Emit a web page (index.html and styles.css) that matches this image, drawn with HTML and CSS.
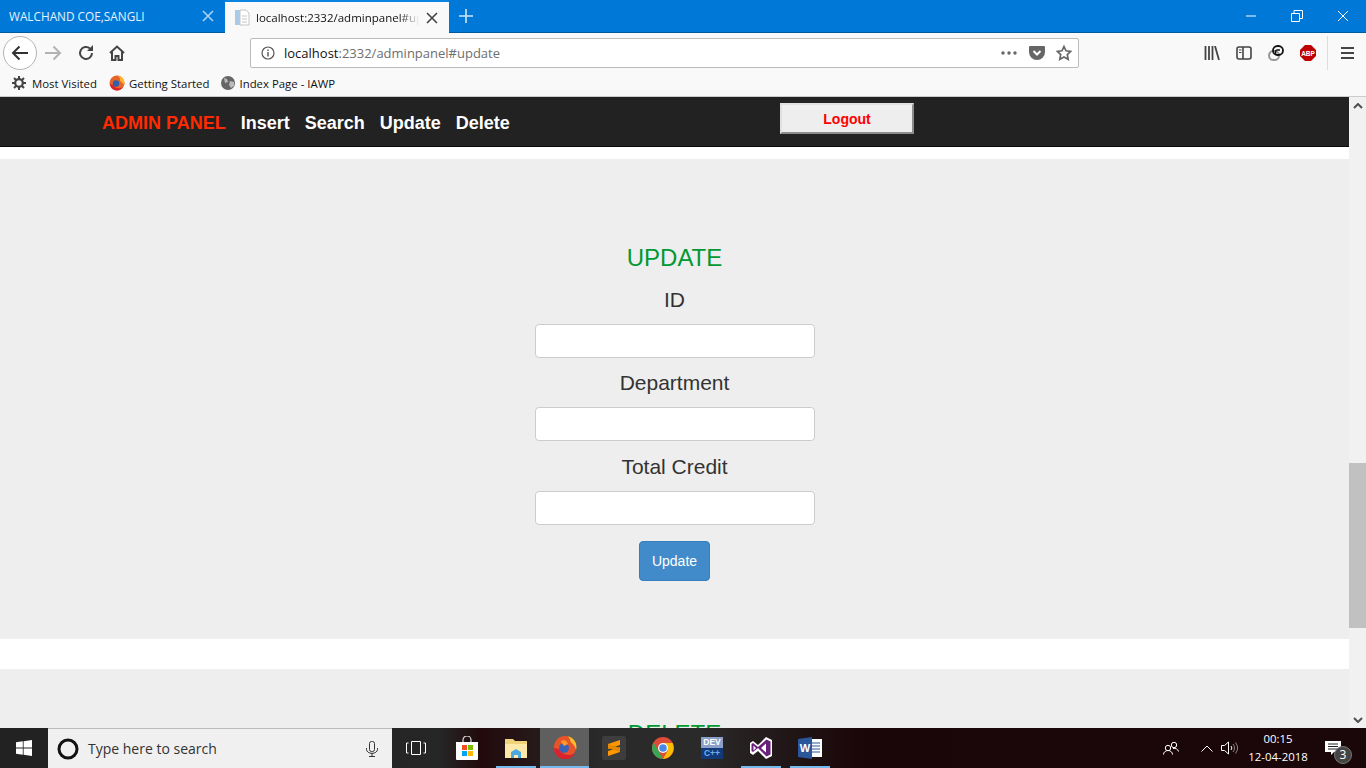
FILE: index.html
```html
<!DOCTYPE html>
<html lang="en">
<head>
    <meta charset="UTF-8">
    <title>Admin Panel</title>
    <link rel="stylesheet" href="styles.css">
</head>
<body>
    <div class="tabbar">
        <div class="tab">
            <span class="tab-title">WALCHAND COE,SANGLI</span>
            <svg class="tab-close" width="12" height="12" viewBox="0 0 12 12"><path d="M1 1l10 10M11 1L1 11" stroke="#a9d3f2" stroke-width="1.6"/></svg>
        </div>
        <div class="tab tab-active">
            <svg class="tab-icon" width="16" height="17" viewBox="0 0 16 17"><path d="M1 1h5v15H1z" fill="#a9cbe8"/><path d="M6 1h6l3 3v12H6z" fill="#fff" stroke="#c4c4c4"/><path d="M8 7h5M8 10h5M8 13h5" stroke="#c4c4c4"/></svg>
            <span class="tab-title tab-fade">localhost:2332/adminpanel#update</span>
            <svg class="tab-close" width="12" height="12" viewBox="0 0 12 12"><path d="M1 1l10 10M11 1L1 11" stroke="#444" stroke-width="1.6"/></svg>
        </div>
        <svg class="new-tab" width="14" height="14" viewBox="0 0 14 14"><path d="M7 0v14M0 7h14" stroke="#cfe6f8" stroke-width="1.6"/></svg>
        <div class="window-buttons">
            <svg width="12" height="12" viewBox="0 0 12 12"><path d="M1 6h10" stroke="#fff"/></svg>
            <svg width="12" height="12" viewBox="0 0 12 12"><path d="M.5 3.5h8v8h-8zM3 3V.5h8.500v8H9" fill="none" stroke="#fff"/></svg>
            <svg width="12" height="12" viewBox="0 0 12 12"><path d="M1 1l10 10M11 1L1 11" stroke="#fff"/></svg>
        </div>
    </div>

    <div class="toolbar">
        <div class="back-button">
            <svg width="18" height="16" viewBox="0 0 18 16"><path d="M17 8H2M8.500 1.500L2 8l6.500 6.500" fill="none" stroke="#333" stroke-width="2"/></svg>
        </div>
        <div class="tool">
            <svg width="18" height="16" viewBox="0 0 18 16"><path d="M1 8h15M9.500 1.500L16 8l-6.500 6.500" fill="none" stroke="#b3b3b3" stroke-width="2"/></svg>
        </div>
        <div class="tool tool-reload">
            <svg width="16" height="16" viewBox="0 0 16 16"><path d="M14 8a6 6 0 1 1-2-4.500" fill="none" stroke="#444" stroke-width="2"/><path d="M15 0v6H9z" fill="#444"/></svg>
        </div>
        <div class="tool">
            <svg width="16" height="16" viewBox="0 0 16 16"><path d="M1 8l7-6.500L15 8M3 7v8h3.500v-4h3v4H13V7" fill="none" stroke="#444" stroke-width="2"/></svg>
        </div>
        <div class="urlbar">
            <svg class="url-info" width="14" height="14" viewBox="0 0 14 14"><circle cx="7" cy="7" r="6" fill="none" stroke="#555" stroke-width="1.2"/><path d="M7 6v4.500M7 3.500v1.500" stroke="#555" stroke-width="1.400"/></svg>
            <span class="url-text">localhost<span class="url-rest">:2332/adminpanel#update</span></span>
            <div class="url-actions">
                <svg width="18" height="4" viewBox="0 0 18 4"><circle cx="3" cy="2" r="1.700" fill="#666"/><circle cx="9" cy="2" r="1.700" fill="#666"/><circle cx="15" cy="2" r="1.700" fill="#666"/></svg>
                <svg width="16" height="14" viewBox="0 0 16 14"><path d="M1 0h14a1 1 0 0 1 1 1v5a8 8 0 0 1-16 0V1a1 1 0 0 1 1-1z" fill="#666"/><path d="M4.500 5L8 8.500 11.500 5" fill="none" stroke="#fff" stroke-width="2"/></svg>
                <svg width="16" height="16" viewBox="0 0 16 16"><path d="M8 1.500l2 4.300 4.700.6-3.400 3.200.9 4.700L8 12l-4.200 2.300.9-4.700L1.300 6.400 6 5.800z" fill="none" stroke="#666" stroke-width="1.700"/></svg>
            </div>
        </div>
        <div class="tool">
            <svg width="16" height="14" viewBox="0 0 16 14"><path d="M1.500 0v14M5 0v14M8.500 0v14M11 0l4 14" fill="none" stroke="#444" stroke-width="1.800"/></svg>
        </div>
        <div class="tool">
            <svg width="16" height="14" viewBox="0 0 16 14"><rect x="1" y="1" width="14" height="12" rx="2" fill="none" stroke="#444" stroke-width="1.600"/><path d="M7 1v12" stroke="#444" stroke-width="1.600"/><path d="M3 4h2.500M3 6.500h2.500" stroke="#444"/></svg>
        </div>
        <div class="tool">
            <svg width="16" height="16" viewBox="0 0 16 16"><rect x="1" y="6" width="10" height="9" rx="4.500" fill="none" stroke="#999" stroke-width="2"/><rect x="5" y="1" width="10" height="9" rx="4.500" fill="none" stroke="#111" stroke-width="1.800"/><path d="M7.500 9V7a2 2 0 0 1 2-2h2.500" fill="none" stroke="#111" stroke-width="1.500"/></svg>
        </div>
        <div class="tool">
            <svg width="16" height="16" viewBox="0 0 16 16"><path d="M5 0h6l5 5v6l-5 5H5l-5-5V5z" fill="#c00000"/><text x="8" y="10.500" class="abp-text">ABP</text></svg>
        </div>
        <div class="toolbar-sep"></div>
        <div class="tool">
            <svg width="13" height="12" viewBox="0 0 13 12"><path d="M0 1h13M0 6h13M0 11h13" stroke="#444" stroke-width="2"/></svg>
        </div>
    </div>

    <div class="bookmarks">
        <div class="bookmark bookmark-gear">
            <svg width="14" height="14" viewBox="0 0 14 14"><circle cx="7" cy="7" r="3.800" fill="none" stroke="#444" stroke-width="2.200"/><path d="M7 0v3M7 11v3M0 7h3M11 7h3M2 2l2 2M10 10l2 2M12 2l-2 2M4 10l-2 2" stroke="#444" stroke-width="2"/></svg>
            <span>Most Visited</span>
        </div>
        <div class="bookmark bookmark-ff">
            <svg width="16" height="16" viewBox="0 0 16 16"><circle cx="8" cy="8" r="7.500" fill="#e8632a"/><path d="M8 .5a7.500 7.500 0 0 1 7 10c-1-4-4-3-4-6 0-2-1-3-3-4z" fill="#ffb52e"/><circle cx="7" cy="8.500" r="3.200" fill="#2f5fa8"/><path d="M1 9a7 7 0 0 0 13 3c-3 2-8 2-10-2z" fill="#d8232a"/></svg>
            <span>Getting Started</span>
        </div>
        <div class="bookmark">
            <svg width="14" height="14" viewBox="0 0 14 14"><circle cx="7" cy="7" r="7" fill="#666"/><path d="M3 2l3 1 1 3-3 1zM9 5l4 1v4l-3 2-2-3z" fill="#bbb"/></svg>
            <span>Index Page - IAWP</span>
        </div>
    </div>

    <div class="page">
        <div class="content">
            <nav class="navbar">
                <div class="nav-links">
                    <a class="nav-brand">ADMIN PANEL</a>
                    <a>Insert</a>
                    <a>Search</a>
                    <a>Update</a>
                    <a>Delete</a>
                </div>
                <button class="logout">Logout</button>
            </nav>

            <section class="panel panel-update">
                <h3>UPDATE</h3>
                <label>ID</label>
                <input type="text">
                <label>Department</label>
                <input type="text">
                <label>Total Credit</label>
                <input type="text">
                <button class="btn-primary">Update</button>
            </section>

            <section class="panel panel-delete">
                <h3>DELETE</h3>
            </section>
        </div>
        <div class="scrollbar">
            <div class="scroll-arrow">
                <svg width="10" height="6" viewBox="0 0 10 6"><path d="M1 5l4-4 4 4" fill="none" stroke="#505050" stroke-width="2"/></svg>
            </div>
            <div class="scroll-track"><div class="scroll-thumb"></div></div>
            <div class="scroll-arrow">
                <svg width="10" height="6" viewBox="0 0 10 6"><path d="M1 1l4 4 4-4" fill="none" stroke="#505050" stroke-width="2"/></svg>
            </div>
        </div>
    </div>

    <div class="taskbar">
        <div class="start">
            <svg width="16" height="16" viewBox="0 0 16 16"><path d="M0 2.300l6.800-1v6.300H0zM7.600 1.200L16 0v7.600H7.600zM0 8.400h6.800v6.300l-6.800-1zM7.600 8.400H16V16l-8.400-1.200z" fill="#fff"/></svg>
        </div>
        <div class="search">
            <svg width="22" height="22" viewBox="0 0 22 22"><circle cx="11" cy="11" r="9" fill="none" stroke="#111" stroke-width="3"/></svg>
            <span class="search-text">Type here to search</span>
            <svg class="search-mic" width="12" height="16" viewBox="0 0 12 16"><rect x="3.500" y=".5" width="5" height="10" rx="2" fill="none" stroke="#333"/><path d="M.5 7v1.500a5 3.500 0 0 0 11 0V7M6 12v3M3 15.500h6" fill="none" stroke="#333"/></svg>
        </div>
        <div class="task-view">
            <svg width="20" height="14" viewBox="0 0 20 14"><path d="M5.500.5h9v13h-9zM2.500 2H.5v10h2M17.500 2h2v10h-2" fill="none" stroke="#fff"/></svg>
        </div>
        <div class="task-icons">
            <div class="task-icon">
                <svg width="24" height="24" viewBox="0 0 24 24"><path d="M8 6V4a4 4 0 0 1 8 0v2" fill="none" stroke="#ddd" stroke-width="1.200"/><path d="M1 6h22v17a1 1 0 0 1-1 1H2a1 1 0 0 1-1-1z" fill="#fff"/><path d="M7 9h5v5H7z" fill="#f25022"/><path d="M13 9h5v5h-5z" fill="#7fba00"/><path d="M7 15h5v5H7z" fill="#00a4ef"/><path d="M13 15h5v5h-5z" fill="#ffb900"/></svg>
            </div>
            <div class="task-icon task-open">
                <svg width="24" height="22" viewBox="0 0 24 22"><path d="M1 2h8l2 2h12v17H1z" fill="#f0d27a"/><path d="M1 7h22v14H1z" fill="#ffe9a8"/><path d="M7 21v-6l5-3 5 3v6h-3v-3h-4v3z" fill="#4aa8e0"/></svg>
            </div>
            <div class="task-icon task-active">
                <svg width="24" height="24" viewBox="0 0 24 24"><circle cx="12" cy="12" r="11" fill="#e8532a"/><path d="M13 1a11 11 0 0 1 10 14c-1-6-5-6-6-10 0-2-2-4-4-4z" fill="#ffbd2e"/><circle cx="11" cy="13" r="5" fill="#3a62b5"/><path d="M8 6c3-2 6 0 7 3l-4 2c-1-2-3-3-3-5z" fill="#ff9a2a"/><path d="M1 13a11 11 0 0 0 21 5c-4 3-13 3-16-4z" fill="#d9232e"/></svg>
            </div>
            <div class="task-icon">
                <svg width="24" height="24" viewBox="0 0 24 24"><rect width="24" height="24" rx="2" fill="#3d3d3d"/><path d="M18 4v5L6 13V8z" fill="#ff9800"/><path d="M18 11v5L6 20v-5z" fill="#ff9800"/><path d="M6 8l12 4v4L6 12z" fill="#e58a00"/></svg>
            </div>
            <div class="task-icon">
                <svg width="22" height="22" viewBox="0 0 22 22"><circle cx="11" cy="11" r="11" fill="#dd4b39"/><path d="M1.500 5.500L7 15l4 7A11 11 0 0 1 1.500 5.500z" fill="#34a853"/><path d="M11 6h9.500A11 11 0 0 1 11 22l5-9z" fill="#fbbc05"/><circle cx="11" cy="11" r="5" fill="#fff"/><circle cx="11" cy="11" r="3.800" fill="#4a88e8"/></svg>
            </div>
            <div class="task-icon">
                <div class="dev-cpp"><span>DEV</span><span class="dev-plus">C++</span></div>
            </div>
            <div class="task-icon task-open">
                <svg width="24" height="24" viewBox="0 0 24 24"><path d="M17 1l6 3v16l-6 3-8-8-5 4-3-2V7l3-2 5 4z" fill="#fff"/><path d="M17.500 3.500l4 2v13l-4 2-8.500-8.500-5 4-1.500-1V8l1.500-1 5 4zM17 7.500L12 12l5 4.500zM4.500 9.500v5L7 12z" fill="#68217a" fill-rule="evenodd"/></svg>
            </div>
            <div class="task-icon task-open">
                <svg width="24" height="22" viewBox="0 0 24 22"><path d="M10 2h14v18H10z" fill="#fff"/><path d="M13 6h9M13 9h9M13 12h9M13 15h9" stroke="#2b579a"/><path d="M0 2l14-2v22L0 20z" fill="#2b579a"/><text x="7" y="15" class="word-text">W</text></svg>
            </div>
        </div>
        <div class="tray">
            <svg class="tray-people" width="16" height="14" viewBox="0 0 16 14"><circle cx="11" cy="4" r="2.700" fill="none" stroke="#fff"/><circle cx="5" cy="7" r="2.700" fill="none" stroke="#fff"/><path d="M.5 13.500a4.500 4 0 0 1 9 0M10 7.500c2.500-.500 5 .5 5.500 3" fill="none" stroke="#fff"/></svg>
            <svg class="tray-arrow" width="12" height="7" viewBox="0 0 12 7"><path d="M.5 6.500L6 1l5.500 5.500" fill="none" stroke="#fff"/></svg>
            <svg class="tray-sound" width="17" height="14" viewBox="0 0 17 14"><path d="M.5 4.500h3l4-3.500v12l-4-3.500h-3z" fill="none" stroke="#fff"/><path d="M10 5a3 3 0 0 1 0 4" fill="none" stroke="#fff"/><path d="M12 3a6 6 0 0 1 0 8M14.500 1.500a9 9 0 0 1 0 11" fill="none" stroke="#888"/></svg>
            <div class="clock">
                <span>00:15</span>
                <span>12-04-2018</span>
            </div>
            <div class="notify">
                <svg width="16" height="15" viewBox="0 0 16 15"><path d="M0 0h16v11h-7l-3 3v-3H0z" fill="#fff"/><path d="M3 3h10M3 5.500h10M3 8h10" stroke="#222"/></svg>
                <span class="notify-badge">3</span>
            </div>
        </div>
    </div>
</body>
</html>
```

FILE: styles.css
```css
* {
    box-sizing: border-box;
}

html, body {
    height: 768px;
}

body {
    margin: 0;
    overflow: hidden;
    display: flex;
    flex-direction: column;
    font-family: "Open Sans", "Noto Sans", sans-serif;
    background-color: #fff;
}

svg {
    display: block;
    flex: none;
}

/* browser tabs */
.tabbar {
    height: 33px;
    display: flex;
    align-items: stretch;
    background-color: #0078d7;
    border-bottom: 1px solid #005a9e;
    flex: none;
}

.tab {
    width: 225px;
    padding: 0 11px 0 9px;
    display: flex;
    align-items: center;
    color: #e6f2fb;
    font-size: 11.800px;
}

.tab-active {
    width: 224px;
    height: 33px;
    background-color: #f9f9f9;
    border-top: 2px solid #0a84e0;
    color: #111;
    font-size: 11.500px;
}

.tab-icon {
    margin-right: 6px;
}

.tab-title {
    flex: 1;
    overflow: hidden;
    white-space: nowrap;
}

.tab-fade {
    margin-right: 7px;
    mask-image: linear-gradient(90deg, #000 88%, transparent 100%);
}

.new-tab {
    margin: 9px 0 0 10px;
}

.window-buttons {
    margin-left: auto;
    display: flex;
    align-items: center;
    gap: 34px;
    padding-right: 17px;
}

/* nav toolbar */
.toolbar {
    height: 37px;
    display: flex;
    align-items: center;
    padding: 3px 0 0 3px;
    background-color: #f9f9f9;
    flex: none;
}

.back-button {
    width: 34px;
    height: 34px;
    border: 1px solid #b5b5b5;
    border-radius: 50%;
    background-color: #fff;
    display: flex;
    align-items: center;
    justify-content: center;
}

.tool {
    width: 32px;
    height: 32px;
    display: flex;
    align-items: center;
    justify-content: center;
}

.tool-reload {
    padding-left: 2px;
}

.urlbar {
    width: 829px;
    height: 30px;
    margin: 0 117px;
    padding: 0 6px 0 10px;
    display: flex;
    align-items: center;
    background-color: #fff;
    border: 1px solid #bcbcbc;
    border-radius: 2px;
}

.url-info {
    margin-right: 9px;
}

.url-text {
    font-size: 13px;
    color: #111;
}

.url-rest {
    color: #6e6e6e;
}

.url-actions {
    margin-left: auto;
    display: flex;
    align-items: center;
    gap: 11px;
}

.toolbar-sep {
    width: 1px;
    height: 34px;
    margin: 0 3px;
    background-color: #ddd;
}

.abp-text {
    font-family: "Liberation Sans", sans-serif;
    font-size: 6.500px;
    font-weight: bold;
    fill: #fff;
    text-anchor: middle;
}

/* bookmarks */
.bookmarks {
    height: 27px;
    display: flex;
    align-items: center;
    padding-left: 12px;
    background-color: #f9f9f9;
    border-bottom: 1px solid #ccc;
    flex: none;
}

.bookmark {
    display: flex;
    align-items: center;
    gap: 4px;
    font-size: 11.400px;
    color: #111;
}

.bookmark-gear {
    gap: 6px;
    margin-right: 12px;
}

.bookmark-ff {
    margin-right: 12px;
}

/* the page itself */
.page {
    flex: 1;
    min-height: 0;
    display: flex;
}

.content {
    flex: 1;
    min-width: 0;
    overflow: hidden;
    font-family: "Liberation Sans", Arial, sans-serif;
}

.navbar {
    height: 50px;
    display: flex;
    background-color: #222;
    border-bottom: 1px solid #080808;
}

.nav-links {
    width: 780px;
    padding: 4px 0 0 102px;
    display: flex;
    align-items: center;
    gap: 15px;
    font-size: 18px;
    font-weight: bold;
    color: #fff;
}

.nav-brand {
    color: #ff2a00;
}

.logout {
    width: 134px;
    height: 31px;
    margin-top: 6px;
    background-color: #eee;
    border: 2px outset #e0e0e0;
    color: #f00;
    font-family: "Liberation Sans", Arial, sans-serif;
    font-size: 14px;
    font-weight: bold;
}

.panel {
    display: flex;
    flex-direction: column;
    align-items: center;
    background-color: #eee;
    color: #333;
}

.panel h3 {
    margin: 0;
    height: 26px;
    line-height: 26px;
    font-size: 24px;
    font-weight: normal;
    color: #093;
}

.panel label {
    height: 22px;
    line-height: 22px;
    margin-bottom: 13px;
    font-size: 21px;
}

.panel input {
    width: 280px;
    height: 34px;
    margin-bottom: 14.400px;
    background-color: #fff;
    border: 1px solid #ccc;
    border-radius: 4px;
}

.panel-update {
    height: 480px;
    margin-top: 12px;
    padding-top: 86px;
}

.panel-update h3 {
    margin-bottom: 18px;
}

.panel-delete {
    margin-top: 30px;
    padding-top: 52px;
    height: 200px;
}

.btn-primary {
    width: 71px;
    height: 40px;
    margin-top: 1.800px;
    background-color: #428bca;
    border: 1px solid #357ebd;
    border-radius: 4px;
    color: #fff;
    font-family: "Liberation Sans", Arial, sans-serif;
    font-size: 14px;
}

.scrollbar {
    width: 17px;
    display: flex;
    flex-direction: column;
    background-color: #f1f1f1;
    flex: none;
}

.scroll-arrow {
    height: 17px;
    display: flex;
    align-items: center;
    justify-content: center;
    flex: none;
}

.scroll-track {
    flex: 1;
}

.scroll-thumb {
    height: 165px;
    margin-top: 349px;
    background-color: #c1c1c1;
}

/* windows taskbar */
.taskbar {
    height: 40px;
    display: flex;
    align-items: stretch;
    color: #fff;
    background: linear-gradient(90deg, #222 0, #262626 440px, #220a0c 480px, #2a2a2a 600px, #2a2a2a 700px, #1a0608 860px, #1a0709 100%);
    flex: none;
}

.start {
    width: 48px;
    display: flex;
    align-items: center;
    justify-content: center;
}

.search {
    width: 344px;
    padding: 0 14px 0 9px;
    display: flex;
    align-items: center;
    background-color: #f0f0f0;
    border-top: 1px solid #bbb;
}

.search-text {
    margin-left: 9px;
    font-size: 14px;
    color: #333;
}

.search-mic {
    margin-left: auto;
}

.task-view {
    width: 48px;
    display: flex;
    align-items: center;
    justify-content: center;
}

.task-icons {
    display: flex;
    padding-left: 2px;
}

.task-icon {
    width: 49.100px;
    display: flex;
    align-items: center;
    justify-content: center;
}

.task-open {
    background: linear-gradient(#76b9ed, #76b9ed) center bottom / 40px 2px no-repeat;
}

.task-active {
    border-bottom: 2px solid #76b9ed;
    background-color: #5f5f5f;
}

.dev-cpp {
    width: 22px;
    height: 22px;
    display: flex;
    flex-direction: column;
    align-items: center;
    background: linear-gradient(#8aa0c8 50%, #123a78 50%);
    font-family: "Liberation Sans", sans-serif;
    font-size: 8.500px;
    font-weight: bold;
    line-height: 11px;
}

.dev-plus {
    color: #6fb0f0;
}

.word-text {
    font-family: "Liberation Sans", sans-serif;
    font-size: 11px;
    font-weight: bold;
    fill: #fff;
    text-anchor: middle;
}

.tray {
    margin-left: auto;
    padding-right: 6px;
    display: flex;
    align-items: center;
    font-size: 11.400px;
}

.tray-people {
    margin-right: 22px;
}

.tray-arrow {
    margin-right: 8px;
}

.tray-sound {
    margin-right: 6px;
}

.clock {
    width: 68px;
    display: flex;
    flex-direction: column;
    align-items: center;
    line-height: 18px;
}

.notify {
    position: relative;
    width: 48px;
    padding-left: 13px;
}

.notify-badge {
    position: absolute;
    top: 5px;
    left: 22px;
    width: 18px;
    height: 18px;
    border-radius: 50%;
    background-color: #444;
    border: 1px solid #777;
    font-size: 12px;
    line-height: 16px;
    text-align: center;
}
```
